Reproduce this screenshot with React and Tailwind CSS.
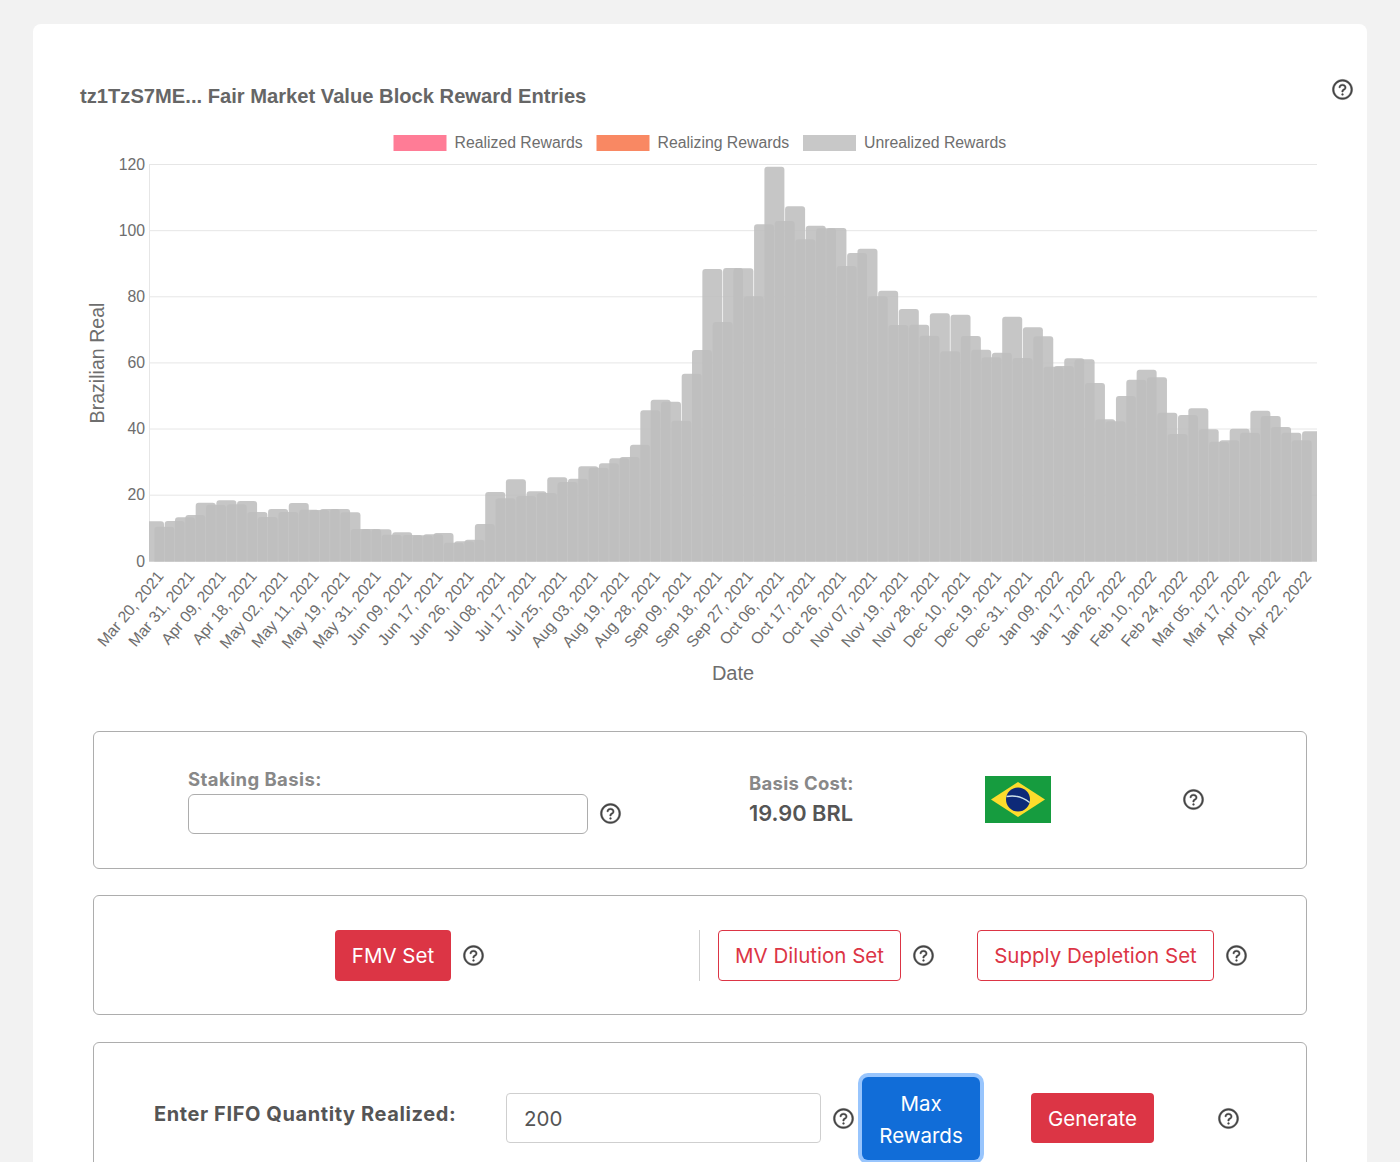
import React from "react";
import { AiOutlineQuestionCircle } from "react-icons/ai";

const tops = [521.3,526.7,521,517.3,515,502.7,504.7,500.3,504.3,501,512,517,509,512,503,509.7,510,509,509,512.3,529,529,529.3,534.7,532.3,535,535.3,534.3,533,542.7,541.3,539.7,524,492,498.3,479.3,496,491.3,493,477.3,482,478.7,466.3,467.7,463.3,458.3,457,444.7,410.3,399.7,401.7,420.7,373.7,350,269,322,268,268.3,296.3,224.3,166.7,221,206.3,239.3,225.7,228.3,228,266,253,248.7,296.3,290.7,325,309,324.7,335.7,313.3,351.3,314.7,336,349.7,357.3,352.7,316.7,358,327.3,336.3,366.7,366,358.3,359.3,383,419.3,421.3,396,379.7,369.7,377.3,412.7,434,415,408.3,429.3,441.7,440.3,428.7,432.7,410.7,416,427,432.7,440.3,431.3];
const labels = ["Mar 20, 2021","Mar 31, 2021","Apr 09, 2021","Apr 18, 2021","May 02, 2021","May 11, 2021","May 19, 2021","May 31, 2021","Jun 09, 2021","Jun 17, 2021","Jun 26, 2021","Jul 08, 2021","Jul 17, 2021","Jul 25, 2021","Aug 03, 2021","Aug 19, 2021","Aug 28, 2021","Sep 09, 2021","Sep 18, 2021","Sep 27, 2021","Oct 06, 2021","Oct 17, 2021","Oct 26, 2021","Nov 07, 2021","Nov 19, 2021","Nov 28, 2021","Dec 10, 2021","Dec 19, 2021","Dec 31, 2021","Jan 09, 2022","Jan 17, 2022","Jan 26, 2022","Feb 10, 2022","Feb 24, 2022","Mar 05, 2022","Mar 17, 2022","Apr 01, 2022","Apr 22, 2022"];
const grid = [[120,164.5],[100,230.7],[80,296.8],[60,362.9],[40,429],[20,495.2],[0,561.5]];
const F = "'Liberation Sans', Arial, sans-serif";
const GREY = "#6e6e6e";

function Chart() {
  const step = 10.34;
  const barBottom = 561.5;
  return (
    <svg width="1334" height="600" viewBox="33 108 1334 600" className="block" style={{ fontFamily: F }}>
      <defs>
        <clipPath id="plot"><rect x="149" y="150" width="1168" height="412" /></clipPath>
      </defs>
      <g fill={GREY} fontSize="15.8">
        <rect x="393.5" y="135" width="53" height="16" fill="#ff7c96" />
        <text x="454.5" y="148">Realized Rewards</text>
        <rect x="596.5" y="135" width="53" height="16" fill="#f98863" />
        <text x="657.5" y="148">Realizing Rewards</text>
        <rect x="803" y="135" width="53" height="16" fill="#c8c8c8" />
        <text x="864" y="148">Unrealized Rewards</text>
      </g>
      {grid.map(([v, y]) => (
        <g key={v}>
          <line x1="149" x2="1317" y1={y} y2={y} stroke="#e6e6e6" strokeWidth="1" />
          <text x="145" y={y + 5} textAnchor="end" fontSize="15.8" fill={GREY}>{v}</text>
        </g>
      ))}
      <line x1="149.5" x2="149.5" y1="164" y2="562" stroke="#e6e6e6" />
      <g clipPath="url(#plot)">
        {tops.map((t, i) => {
          const x = 144 + step * i;
          const w = 20;
          const r = 3;
          return (
            <path
              key={i}
              d={`M${x} ${barBottom}V${t + r}Q${x} ${t} ${x + r} ${t}H${x + w - r}Q${x + w} ${t} ${x + w} ${t + r}V${barBottom}Z`}
              fill="rgba(190,190,190,0.877)"
            />
          );
        })}
      </g>
      {labels.map((l, i) => {
        const x = 154 + step * 3 * i + 10.5;
        return (
          <text key={l} transform={`translate(${x} 576.5) rotate(-50)`} textAnchor="end" fontSize="15.8" fill={GREY}>{l}</text>
        );
      })}
      <text x="733" y="680" textAnchor="middle" fontSize="20" fill={GREY}>Date</text>
      <text transform="translate(104 363) rotate(-90)" textAnchor="middle" fontSize="19.6" fill={GREY}>Brazilian Real</text>
    </svg>
  );
}

function Help({ className = "" }) {
  return <AiOutlineQuestionCircle size={23} stroke="currentColor" strokeWidth={20} className={`shrink-0 text-[#444444] ${className}`} />;
}

function Flag() {
  return (
    <svg width="66" height="47" viewBox="0 0 66 47" className="block shrink-0">
      <rect width="66" height="47" fill="#169c3f" />
      <polygon points="33,6 60,23.5 33,41 6,23.5" fill="#fddc2c" />
      <circle cx="33" cy="23.5" r="12" fill="#0e2a78" />
      <path d="M21.5 20.5 Q34 18 44.6 26.5" fill="none" stroke="#cfe3ea" strokeWidth="1.4" />
    </svg>
  );
}

export default function App() {
  return (
    <div className="h-[1162px] overflow-hidden bg-[#f2f2f2] px-[33px] pt-6" style={{ fontFamily: "Inter, sans-serif" }}>
      <div className="h-[1300px] rounded-lg bg-white pt-[54px]">
        <div className="flex items-start justify-between pl-[47px] pr-[13px]">
          <div className="mt-[6px] text-[20.16px] font-bold leading-6 text-[#666666]" style={{ fontFamily: F }}>
            tz1TzS7ME... Fair Market Value Block Reward Entries
          </div>
          <Help />
        </div>
        <Chart />
        <div className="mx-[60px] mt-[23px] flex flex-col">
          <div className="flex h-[138px] items-start rounded-md border border-[#adadad] pl-[94px]">
            <div className="mt-[35px] flex flex-col">
              <div className="text-[18.5px] font-bold leading-6 tracking-[0.42px] text-[#888888]">Staking Basis:</div>
              <input className="mt-[3px] h-10 w-[400px] rounded-md border border-[#adadad] bg-white" />
            </div>
            <Help className="ml-[11px] mt-[70px]" />
            <div className="ml-[127px] mt-[39px] flex flex-col">
              <div className="text-[18.5px] font-bold leading-6 tracking-[0.3px] text-[#888888]">Basis Cost:</div>
              <div className="mt-1 text-[21.8px] font-semibold leading-7 text-[#555555]">19.90 BRL</div>
            </div>
            <div className="ml-[131px] mt-11"><Flag /></div>
            <Help className="ml-[131px] mt-[56px]" />
          </div>
          <div className="mt-[26px] flex h-[120px] items-start rounded-md border border-[#adadad] pl-[241px] pt-[34px]">
            <button className="h-[51px] w-[116px] rounded bg-[#dc3545] pt-px text-[20.5px] text-white">FMV Set</button>
            <Help className="ml-[11px] mt-[14px]" />
            <div className="ml-[214px] h-[51px] w-px bg-[#cfcfcf]" />
            <button className="ml-[18px] h-[51px] w-[183px] rounded border border-[#dc3545] pt-px text-[20.5px] text-[#dc3545]">MV Dilution Set</button>
            <Help className="ml-[11px] mt-[14px]" />
            <button className="ml-[42px] h-[51px] w-[237px] rounded border border-[#dc3545] pt-px text-[20.5px] text-[#dc3545]">Supply Depletion Set</button>
            <Help className="ml-[11px] mt-[14px]" />
          </div>
          <div className="mt-[27px] flex h-[200px] items-start rounded-md border border-[#adadad] pl-[60px] pt-[34px]">
            <div className="mt-[23px] w-[352px] text-[20px] font-bold leading-7 tracking-[0.6px] text-[#555555]">Enter FIFO Quantity Realized:</div>
            <input defaultValue="200" className="mt-4 h-[50px] w-[315px] rounded border border-[#cfcfcf] px-[17px] pt-px text-[20.5px] text-[#555555]" />
            <Help className="ml-[11px] mt-[30px]" />
            <button className="ml-[7px] h-[83px] w-[118px] rounded-md bg-[#116dd8] pt-[2px] text-[20.5px] leading-[32px] text-white ring-4 ring-[#98c5fd]">Max<br />Rewards</button>
            <button className="ml-[51px] mt-4 h-[50px] w-[123px] rounded bg-[#dc3545] pt-[2px] text-[20.5px] text-white">Generate</button>
            <Help className="ml-[63px] mt-[30px]" />
          </div>
        </div>
      </div>
    </div>
  );
}
